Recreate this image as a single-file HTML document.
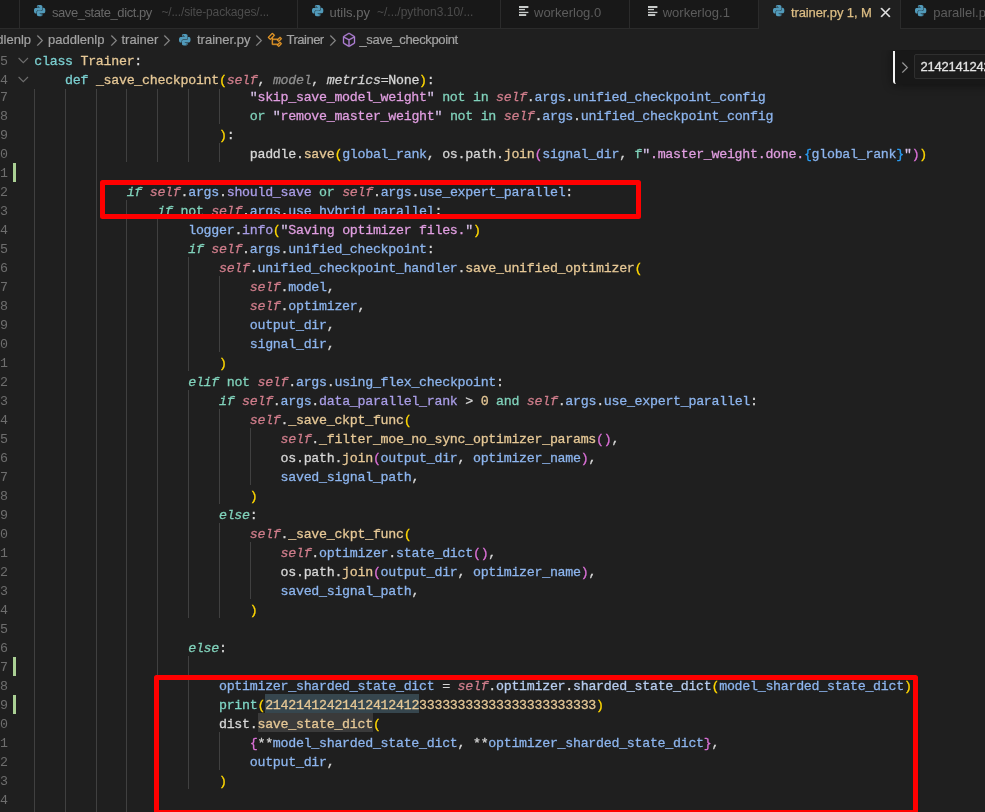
<!DOCTYPE html><html><head><meta charset="utf-8"><title>trainer.py</title><style>

*{box-sizing:border-box;margin:0;padding:0}
html,body{width:985px;height:812px;overflow:hidden;background:#1f1f1f}
body{position:relative;font-family:"Liberation Sans",sans-serif}
#ed{position:absolute;will-change:transform;left:0;top:0;width:985px;height:812px;font-family:"Liberation Mono",monospace;font-size:13.3px;letter-spacing:-0.2843px;color:#d4d4d4}
.r{position:absolute;left:0;width:985px;height:19px;line-height:19px;white-space:pre}
.c{position:absolute;left:34.3px;top:2px;-webkit-text-stroke:0.28px}
.ln{position:absolute;left:0px;top:2px;color:#6e6e6e}
.g{position:absolute;top:0;width:1px;height:19px;background:#404040}
.git{position:absolute;left:13px;top:0.6px;width:3px;height:19px;background:#aad094}
.i{font-style:italic}
.kw{color:#80d2bb}
.kwd{color:#7bcfd0}
.kwi{color:#80d2bb}
.cls{color:#e6c896}
.fn{color:#e6c896}
.self{color:#cf7d8b}
.par{color:#8e8e8e}
.var{color:#8db5ee}
.prop{color:#a99de6}
.pl{color:#d6d6d6}
.str{color:#e09ee0}
.q{color:#d8c2ea}
.b1{color:#ffd700}
.b2{color:#da70d6}
.b3{color:#2b9bf0}
.num{color:#e6c896}
.ln{color:#6e6e6e}
.kwi,.self,.par,.pari{font-style:italic}
.pari{color:#d0d0d0}
.var2{color:#b6ccee}
.bi{color:#7fd6c6}
.numh{color:#e6c896}
.fnh{color:#e6c896}
.hl{position:absolute;top:0;height:19px}

#tabs{position:absolute;will-change:transform;left:0;top:0;width:985px;height:29px;background:#181818;font-size:13px;color:#686868}
#tabs:after{content:"";position:absolute;left:0;top:28px;width:985px;height:1px;background:#2b2b2b}
.tab{position:absolute;top:0;height:29px;border-right:1px solid #2b2b2b;white-space:nowrap;overflow:hidden}
.tab.act{background:#1f1f1f;z-index:2;-webkit-text-stroke:0.25px}
.t{position:absolute;top:0;line-height:25px;white-space:nowrap}
.tab .d{font-size:12px;color:#4c4c4c}
#bc{position:absolute;will-change:transform;-webkit-text-stroke:0.2px;left:0;top:29px;width:985px;height:21px;background:#1f1f1f;font-size:13px;color:#a2a2a2;white-space:nowrap}
#bc .t{line-height:22px}
svg.ic{position:absolute;overflow:visible}
#findclip{position:absolute;left:860px;top:50.4px;width:125px;height:70px;overflow:hidden}
#find{position:absolute;will-change:transform;left:33px;top:0.4px;width:100px;height:33px;background:#181818;border-left:2.6px solid #f4f4f4;border-bottom-left-radius:3px;box-shadow:0 0 8px 2px rgba(0,0,0,.36)}
#find .inp{position:absolute;-webkit-text-stroke:0.3px;left:19.2px;top:3px;width:90px;height:25px;background:#1c1c1c;border:1px solid #2f2f2f;border-radius:2px;color:#e4e4e4;font-size:13px;line-height:23px;padding-left:5.3px;white-space:nowrap;overflow:hidden;letter-spacing:-0.22px}
.ann{position:absolute;border:5.2px solid #ff0000;border-radius:2.5px}

</style></head><body>
<div id="ed">
<div style="position:absolute;left:0;top:50px;width:985px;height:38.5px;background:#1f1f1f;z-index:1"></div>
<div class="r" style="top:50px;z-index:2"><span class="ln">5</span><svg style="position:absolute;left:17.5px;top:5px" width="11" height="10" viewBox="0 0 11 10"><path d="M0.6 3.0 L5.3 7.7 L10 3.0" fill="none" stroke="#6e6e6e" stroke-width="1.1"/></svg><span class="c"><span class="kwd">class</span><span class="pl"> </span><span class="cls">Trainer</span><span class="pl">:</span></span></div>
<div class="r" style="top:69px;z-index:2"><span class="ln">4</span><svg style="position:absolute;left:17.5px;top:5px" width="11" height="10" viewBox="0 0 11 10"><path d="M0.6 3.0 L5.3 7.7 L10 3.0" fill="none" stroke="#6e6e6e" stroke-width="1.1"/></svg><span class="c">    <span class="kwd">def</span><span class="pl"> </span><span class="fn">_save_checkpoint</span><span class="b1">(</span><span class="self">self</span><span class="pl">, </span><span class="par">model</span><span class="pl">, </span><span class="pari">metrics</span><span class="pl">=None</span><span class="b1">)</span><span class="pl">:</span></span></div>
<div class="r" style="top:86px"><span class="ln">7</span><span class="g" style="left:34.0px"></span><span class="g" style="left:64.8px"></span><span class="g" style="left:95.6px"></span><span class="g" style="left:126.4px"></span><span class="g" style="left:157.2px"></span><span class="g" style="left:187.9px"></span><span class="g" style="left:218.7px"></span><span class="c">                            <span class="str"><span class="q">"</span>skip_save_model_weight<span class="q">"</span></span><span class="pl"> </span><span class="kw">not</span><span class="pl"> </span><span class="kw">in</span><span class="pl"> </span><span class="self">self</span><span class="pl">.</span><span class="var">args</span><span class="pl">.</span><span class="var">unified_checkpoint_config</span></span></div>
<div class="r" style="top:105px"><span class="ln">8</span><span class="g" style="left:34.0px"></span><span class="g" style="left:64.8px"></span><span class="g" style="left:95.6px"></span><span class="g" style="left:126.4px"></span><span class="g" style="left:157.2px"></span><span class="g" style="left:187.9px"></span><span class="g" style="left:218.7px"></span><span class="c">                            <span class="kw">or</span><span class="pl"> </span><span class="str"><span class="q">"</span>remove_master_weight<span class="q">"</span></span><span class="pl"> </span><span class="kw">not</span><span class="pl"> </span><span class="kw">in</span><span class="pl"> </span><span class="self">self</span><span class="pl">.</span><span class="var">args</span><span class="pl">.</span><span class="var">unified_checkpoint_config</span></span></div>
<div class="r" style="top:124px"><span class="ln">9</span><span class="g" style="left:34.0px"></span><span class="g" style="left:64.8px"></span><span class="g" style="left:95.6px"></span><span class="g" style="left:126.4px"></span><span class="g" style="left:157.2px"></span><span class="g" style="left:187.9px"></span><span class="c">                        <span class="b1">)</span><span class="pl">:</span></span></div>
<div class="r" style="top:143px"><span class="ln">0</span><span class="g" style="left:34.0px"></span><span class="g" style="left:64.8px"></span><span class="g" style="left:95.6px"></span><span class="g" style="left:126.4px"></span><span class="g" style="left:157.2px"></span><span class="g" style="left:187.9px"></span><span class="g" style="left:218.7px"></span><span class="c">                            <span class="pl">paddle.</span><span class="fn">save</span><span class="b1">(</span><span class="var">global_rank</span><span class="pl">, os.path.</span><span class="fn">join</span><span class="b2">(</span><span class="var">signal_dir</span><span class="pl">, </span><span class="kw">f</span><span class="str"><span class="q">"</span>.master_weight.done.</span><span class="b3">{</span><span class="var">global_rank</span><span class="b3">}</span><span class="str"><span class="q">"</span></span><span class="b2">)</span><span class="b1">)</span></span></div>
<div class="r" style="top:162px"><span class="ln">1</span><span class="git"></span><span class="g" style="left:34.0px"></span><span class="g" style="left:64.8px"></span><span class="g" style="left:95.6px"></span></div>
<div class="r" style="top:181px"><span class="ln">2</span><span class="g" style="left:34.0px"></span><span class="g" style="left:64.8px"></span><span class="g" style="left:95.6px"></span><span class="c">            <span class="kwi">if</span><span class="pl"> </span><span class="self">self</span><span class="pl">.</span><span class="var">args</span><span class="pl">.</span><span class="prop">should_save</span><span class="pl"> </span><span class="kw">or</span><span class="pl"> </span><span class="self">self</span><span class="pl">.</span><span class="var">args</span><span class="pl">.</span><span class="var">use_expert_parallel</span><span class="pl">:</span></span></div>
<div class="r" style="top:200px"><span class="ln">3</span><span class="g" style="left:34.0px"></span><span class="g" style="left:64.8px"></span><span class="g" style="left:95.6px"></span><span class="g" style="left:126.4px"></span><span class="c">                <span class="kwi">if</span><span class="pl"> </span><span class="kw">not</span><span class="pl"> </span><span class="self">self</span><span class="pl">.</span><span class="var">args</span><span class="pl">.</span><span class="var">use_hybrid_parallel</span><span class="pl">:</span></span></div>
<div class="r" style="top:219px"><span class="ln">4</span><span class="g" style="left:34.0px"></span><span class="g" style="left:64.8px"></span><span class="g" style="left:95.6px"></span><span class="g" style="left:126.4px"></span><span class="g" style="left:157.2px"></span><span class="c">                    <span class="var">logger</span><span class="pl">.</span><span class="prop">info</span><span class="b1">(</span><span class="str"><span class="q">"</span>Saving optimizer files.<span class="q">"</span></span><span class="b1">)</span></span></div>
<div class="r" style="top:238px"><span class="ln">5</span><span class="g" style="left:34.0px"></span><span class="g" style="left:64.8px"></span><span class="g" style="left:95.6px"></span><span class="g" style="left:126.4px"></span><span class="g" style="left:157.2px"></span><span class="c">                    <span class="kwi">if</span><span class="pl"> </span><span class="self">self</span><span class="pl">.</span><span class="var">args</span><span class="pl">.</span><span class="var">unified_checkpoint</span><span class="pl">:</span></span></div>
<div class="r" style="top:257px"><span class="ln">6</span><span class="g" style="left:34.0px"></span><span class="g" style="left:64.8px"></span><span class="g" style="left:95.6px"></span><span class="g" style="left:126.4px"></span><span class="g" style="left:157.2px"></span><span class="g" style="left:187.9px"></span><span class="c">                        <span class="self">self</span><span class="pl">.</span><span class="var">unified_checkpoint_handler</span><span class="pl">.</span><span class="fn">save_unified_optimizer</span><span class="b1">(</span></span></div>
<div class="r" style="top:276px"><span class="ln">7</span><span class="g" style="left:34.0px"></span><span class="g" style="left:64.8px"></span><span class="g" style="left:95.6px"></span><span class="g" style="left:126.4px"></span><span class="g" style="left:157.2px"></span><span class="g" style="left:187.9px"></span><span class="g" style="left:218.7px"></span><span class="c">                            <span class="self">self</span><span class="pl">.</span><span class="var">model</span><span class="pl">,</span></span></div>
<div class="r" style="top:295px"><span class="ln">8</span><span class="g" style="left:34.0px"></span><span class="g" style="left:64.8px"></span><span class="g" style="left:95.6px"></span><span class="g" style="left:126.4px"></span><span class="g" style="left:157.2px"></span><span class="g" style="left:187.9px"></span><span class="g" style="left:218.7px"></span><span class="c">                            <span class="self">self</span><span class="pl">.</span><span class="var">optimizer</span><span class="pl">,</span></span></div>
<div class="r" style="top:314px"><span class="ln">9</span><span class="g" style="left:34.0px"></span><span class="g" style="left:64.8px"></span><span class="g" style="left:95.6px"></span><span class="g" style="left:126.4px"></span><span class="g" style="left:157.2px"></span><span class="g" style="left:187.9px"></span><span class="g" style="left:218.7px"></span><span class="c">                            <span class="var">output_dir</span><span class="pl">,</span></span></div>
<div class="r" style="top:333px"><span class="ln">0</span><span class="g" style="left:34.0px"></span><span class="g" style="left:64.8px"></span><span class="g" style="left:95.6px"></span><span class="g" style="left:126.4px"></span><span class="g" style="left:157.2px"></span><span class="g" style="left:187.9px"></span><span class="g" style="left:218.7px"></span><span class="c">                            <span class="var">signal_dir</span><span class="pl">,</span></span></div>
<div class="r" style="top:352px"><span class="ln">1</span><span class="g" style="left:34.0px"></span><span class="g" style="left:64.8px"></span><span class="g" style="left:95.6px"></span><span class="g" style="left:126.4px"></span><span class="g" style="left:157.2px"></span><span class="g" style="left:187.9px"></span><span class="c">                        <span class="b1">)</span></span></div>
<div class="r" style="top:371px"><span class="ln">2</span><span class="g" style="left:34.0px"></span><span class="g" style="left:64.8px"></span><span class="g" style="left:95.6px"></span><span class="g" style="left:126.4px"></span><span class="g" style="left:157.2px"></span><span class="c">                    <span class="kwi">elif</span><span class="pl"> </span><span class="kw">not</span><span class="pl"> </span><span class="self">self</span><span class="pl">.</span><span class="var">args</span><span class="pl">.</span><span class="var">using_flex_checkpoint</span><span class="pl">:</span></span></div>
<div class="r" style="top:390px"><span class="ln">3</span><span class="g" style="left:34.0px"></span><span class="g" style="left:64.8px"></span><span class="g" style="left:95.6px"></span><span class="g" style="left:126.4px"></span><span class="g" style="left:157.2px"></span><span class="g" style="left:187.9px"></span><span class="c">                        <span class="kwi">if</span><span class="pl"> </span><span class="self">self</span><span class="pl">.</span><span class="var">args</span><span class="pl">.</span><span class="prop">data_parallel_rank</span><span class="pl"> &gt; </span><span class="num">0</span><span class="pl"> </span><span class="kw">and</span><span class="pl"> </span><span class="self">self</span><span class="pl">.</span><span class="var">args</span><span class="pl">.</span><span class="var">use_expert_parallel</span><span class="pl">:</span></span></div>
<div class="r" style="top:409px"><span class="ln">4</span><span class="g" style="left:34.0px"></span><span class="g" style="left:64.8px"></span><span class="g" style="left:95.6px"></span><span class="g" style="left:126.4px"></span><span class="g" style="left:157.2px"></span><span class="g" style="left:187.9px"></span><span class="g" style="left:218.7px"></span><span class="c">                            <span class="self">self</span><span class="pl">.</span><span class="fn">_save_ckpt_func</span><span class="b1">(</span></span></div>
<div class="r" style="top:428px"><span class="ln">5</span><span class="g" style="left:34.0px"></span><span class="g" style="left:64.8px"></span><span class="g" style="left:95.6px"></span><span class="g" style="left:126.4px"></span><span class="g" style="left:157.2px"></span><span class="g" style="left:187.9px"></span><span class="g" style="left:218.7px"></span><span class="g" style="left:249.5px"></span><span class="c">                                <span class="self">self</span><span class="pl">.</span><span class="fn">_filter_moe_no_sync_optimizer_params</span><span class="b2">(</span><span class="b2">)</span><span class="pl">,</span></span></div>
<div class="r" style="top:447px"><span class="ln">6</span><span class="g" style="left:34.0px"></span><span class="g" style="left:64.8px"></span><span class="g" style="left:95.6px"></span><span class="g" style="left:126.4px"></span><span class="g" style="left:157.2px"></span><span class="g" style="left:187.9px"></span><span class="g" style="left:218.7px"></span><span class="g" style="left:249.5px"></span><span class="c">                                <span class="pl">os.path.</span><span class="fn">join</span><span class="b2">(</span><span class="var">output_dir</span><span class="pl">, </span><span class="var">optimizer_name</span><span class="b2">)</span><span class="pl">,</span></span></div>
<div class="r" style="top:466px"><span class="ln">7</span><span class="g" style="left:34.0px"></span><span class="g" style="left:64.8px"></span><span class="g" style="left:95.6px"></span><span class="g" style="left:126.4px"></span><span class="g" style="left:157.2px"></span><span class="g" style="left:187.9px"></span><span class="g" style="left:218.7px"></span><span class="g" style="left:249.5px"></span><span class="c">                                <span class="var">saved_signal_path</span><span class="pl">,</span></span></div>
<div class="r" style="top:485px"><span class="ln">8</span><span class="g" style="left:34.0px"></span><span class="g" style="left:64.8px"></span><span class="g" style="left:95.6px"></span><span class="g" style="left:126.4px"></span><span class="g" style="left:157.2px"></span><span class="g" style="left:187.9px"></span><span class="g" style="left:218.7px"></span><span class="c">                            <span class="b1">)</span></span></div>
<div class="r" style="top:504px"><span class="ln">9</span><span class="g" style="left:34.0px"></span><span class="g" style="left:64.8px"></span><span class="g" style="left:95.6px"></span><span class="g" style="left:126.4px"></span><span class="g" style="left:157.2px"></span><span class="g" style="left:187.9px"></span><span class="c">                        <span class="kwi">else</span><span class="pl">:</span></span></div>
<div class="r" style="top:523px"><span class="ln">0</span><span class="g" style="left:34.0px"></span><span class="g" style="left:64.8px"></span><span class="g" style="left:95.6px"></span><span class="g" style="left:126.4px"></span><span class="g" style="left:157.2px"></span><span class="g" style="left:187.9px"></span><span class="g" style="left:218.7px"></span><span class="c">                            <span class="self">self</span><span class="pl">.</span><span class="fn">_save_ckpt_func</span><span class="b1">(</span></span></div>
<div class="r" style="top:542px"><span class="ln">1</span><span class="g" style="left:34.0px"></span><span class="g" style="left:64.8px"></span><span class="g" style="left:95.6px"></span><span class="g" style="left:126.4px"></span><span class="g" style="left:157.2px"></span><span class="g" style="left:187.9px"></span><span class="g" style="left:218.7px"></span><span class="g" style="left:249.5px"></span><span class="c">                                <span class="self">self</span><span class="pl">.</span><span class="var">optimizer</span><span class="pl">.</span><span class="var">state_dict</span><span class="b2">(</span><span class="b2">)</span><span class="pl">,</span></span></div>
<div class="r" style="top:561px"><span class="ln">2</span><span class="g" style="left:34.0px"></span><span class="g" style="left:64.8px"></span><span class="g" style="left:95.6px"></span><span class="g" style="left:126.4px"></span><span class="g" style="left:157.2px"></span><span class="g" style="left:187.9px"></span><span class="g" style="left:218.7px"></span><span class="g" style="left:249.5px"></span><span class="c">                                <span class="pl">os.path.</span><span class="fn">join</span><span class="b2">(</span><span class="var">output_dir</span><span class="pl">, </span><span class="var">optimizer_name</span><span class="b2">)</span><span class="pl">,</span></span></div>
<div class="r" style="top:580px"><span class="ln">3</span><span class="g" style="left:34.0px"></span><span class="g" style="left:64.8px"></span><span class="g" style="left:95.6px"></span><span class="g" style="left:126.4px"></span><span class="g" style="left:157.2px"></span><span class="g" style="left:187.9px"></span><span class="g" style="left:218.7px"></span><span class="g" style="left:249.5px"></span><span class="c">                                <span class="var">saved_signal_path</span><span class="pl">,</span></span></div>
<div class="r" style="top:599px"><span class="ln">4</span><span class="g" style="left:34.0px"></span><span class="g" style="left:64.8px"></span><span class="g" style="left:95.6px"></span><span class="g" style="left:126.4px"></span><span class="g" style="left:157.2px"></span><span class="g" style="left:187.9px"></span><span class="g" style="left:218.7px"></span><span class="c">                            <span class="b1">)</span></span></div>
<div class="r" style="top:618px"><span class="ln">5</span><span class="g" style="left:34.0px"></span><span class="g" style="left:64.8px"></span><span class="g" style="left:95.6px"></span><span class="g" style="left:126.4px"></span><span class="g" style="left:157.2px"></span></div>
<div class="r" style="top:637px"><span class="ln">6</span><span class="g" style="left:34.0px"></span><span class="g" style="left:64.8px"></span><span class="g" style="left:95.6px"></span><span class="g" style="left:126.4px"></span><span class="g" style="left:157.2px"></span><span class="c">                    <span class="kwi">else</span><span class="pl">:</span></span></div>
<div class="r" style="top:656px"><span class="ln">7</span><span class="git"></span><span class="g" style="left:34.0px"></span><span class="g" style="left:64.8px"></span><span class="g" style="left:95.6px"></span><span class="g" style="left:126.4px"></span><span class="g" style="left:157.2px"></span><span class="g" style="left:187.9px"></span></div>
<div class="r" style="top:675px"><span class="ln">8</span><span class="g" style="left:34.0px"></span><span class="g" style="left:64.8px"></span><span class="g" style="left:95.6px"></span><span class="g" style="left:126.4px"></span><span class="g" style="left:157.2px"></span><span class="g" style="left:187.9px"></span><span class="c">                        <span class="var">optimizer_sharded_state_dict</span><span class="pl"> = </span><span class="self">self</span><span class="pl">.</span><span class="var2">optimizer</span><span class="pl">.</span><span class="var2">sharded_state_dict</span><span class="b1">(</span><span class="var">model_sharded_state_dict</span><span class="b1">)</span></span></div>
<div class="r" style="top:694px"><span class="ln">9</span><span class="git"></span><span class="g" style="left:34.0px"></span><span class="g" style="left:64.8px"></span><span class="g" style="left:95.6px"></span><span class="g" style="left:126.4px"></span><span class="g" style="left:157.2px"></span><span class="g" style="left:187.9px"></span><span class="hl" style="left:265.2px;width:153.9px;background:#36464e"></span><span class="c">                        <span class="bi">print</span><span class="b1">(</span><span class="numh">21421412421412412412</span><span class="num">33333333333333333333333</span><span class="b1">)</span></span></div>
<div class="r" style="top:713px"><span class="ln">0</span><span class="g" style="left:34.0px"></span><span class="g" style="left:64.8px"></span><span class="g" style="left:95.6px"></span><span class="g" style="left:126.4px"></span><span class="g" style="left:157.2px"></span><span class="g" style="left:187.9px"></span><span class="hl" style="left:257.5px;width:115.5px;background:#3a3a3a"></span><span class="c">                        <span class="pl">dist.</span><span class="fnh">save_state_dict</span><span class="b1">(</span></span></div>
<div class="r" style="top:732px"><span class="ln">1</span><span class="g" style="left:34.0px"></span><span class="g" style="left:64.8px"></span><span class="g" style="left:95.6px"></span><span class="g" style="left:126.4px"></span><span class="g" style="left:157.2px"></span><span class="g" style="left:187.9px"></span><span class="g" style="left:218.7px"></span><span class="c">                            <span class="b2">{</span><span class="pl">**</span><span class="var">model_sharded_state_dict</span><span class="pl">, **</span><span class="var">optimizer_sharded_state_dict</span><span class="b2">}</span><span class="pl">,</span></span></div>
<div class="r" style="top:751px"><span class="ln">2</span><span class="g" style="left:34.0px"></span><span class="g" style="left:64.8px"></span><span class="g" style="left:95.6px"></span><span class="g" style="left:126.4px"></span><span class="g" style="left:157.2px"></span><span class="g" style="left:187.9px"></span><span class="g" style="left:218.7px"></span><span class="c">                            <span class="var">output_dir</span><span class="pl">,</span></span></div>
<div class="r" style="top:770px"><span class="ln">3</span><span class="g" style="left:34.0px"></span><span class="g" style="left:64.8px"></span><span class="g" style="left:95.6px"></span><span class="g" style="left:126.4px"></span><span class="g" style="left:157.2px"></span><span class="g" style="left:187.9px"></span><span class="c">                        <span class="b1">)</span></span></div>
<div class="r" style="top:789px"><span class="ln">4</span><span class="g" style="left:34.0px"></span><span class="g" style="left:64.8px"></span><span class="g" style="left:95.6px"></span><span class="g" style="left:126.4px"></span><span class="g" style="left:157.2px"></span></div>
<div class="r" style="top:808px"><span class="ln">5</span><span class="g" style="left:34.0px"></span><span class="g" style="left:64.8px"></span><span class="g" style="left:95.6px"></span><span class="g" style="left:126.4px"></span><span class="g" style="left:157.2px"></span></div>
</div>

<div id="tabs">
<div class="tab" style="left:0;width:20px"></div>
<div class="tab" style="left:20px;width:278px"><svg class="ic" style="left:14.2px;top:5.3px" width="11.3" height="11.3" viewBox="0 0 24 24"><path fill="#519aba" d="M14.25.18l.9.2.73.26.59.3.45.32.34.34.25.34.16.33.1.3.04.26.02.2-.01.13V8.5l-.05.63-.13.55-.21.46-.26.38-.3.31-.33.25-.35.19-.35.14-.33.1-.3.07-.26.04-.21.02H8.77l-.69.05-.59.14-.5.22-.41.27-.33.32-.27.35-.2.36-.15.37-.1.35-.07.32-.04.27-.02.21v3.06H3.17l-.21-.03-.28-.07-.32-.12-.35-.18-.36-.26-.36-.36-.35-.46-.32-.59-.28-.73-.21-.88-.14-1.05-.05-1.23.06-1.22.16-1.04.24-.87.32-.71.36-.57.4-.44.42-.33.42-.24.4-.16.36-.1.32-.05.24-.01h.16l.06.01h8.16v-.83H6.18l-.01-2.75-.02-.37.05-.34.11-.31.17-.28.25-.26.31-.23.38-.2.44-.18.51-.15.58-.12.64-.1.71-.06.77-.04.84-.02 1.27.05zm-6.3 1.98l-.23.33-.08.41.08.41.23.34.33.22.41.09.41-.09.33-.22.23-.34.08-.41-.08-.41-.23-.33-.33-.22-.41-.09-.41.09zm13.09 3.95l.28.06.32.12.35.18.36.27.36.35.35.47.32.59.28.73.21.88.14 1.04.05 1.23-.06 1.23-.16 1.04-.24.86-.32.71-.36.57-.4.45-.42.33-.42.24-.4.16-.36.09-.32.05-.24.02-.16-.01h-8.22v.82h5.84l.01 2.76.02.36-.05.34-.11.31-.17.29-.25.25-.31.24-.38.2-.44.17-.51.15-.58.13-.64.09-.71.07-.77.04-.84.01-1.27-.04-1.07-.14-.9-.2-.73-.25-.59-.3-.45-.33-.34-.34-.25-.34-.16-.33-.1-.3-.04-.25-.02-.2.01-.13v-5.34l.05-.64.13-.54.21-.46.26-.38.3-.32.33-.24.35-.2.35-.14.33-.1.3-.06.26-.04.21-.02.13-.01h5.84l.69-.05.59-.14.5-.21.41-.28.33-.32.27-.35.2-.36.15-.36.1-.35.07-.32.04-.28.02-.21V6.07h2.09l.14.01zm-6.47 14.25l-.23.33-.08.41.08.41.23.33.33.23.41.08.41-.08.33-.23.23-.33.08-.41-.08-.41-.23-.33-.33-.23-.41-.08-.41.08z"/></svg><span class="t" style="left:32px;letter-spacing:-0.43px">save_state_dict.py</span><span class="t d" style="left:141.4px;letter-spacing:-0.15px">~/.../site-packages/...</span></div>
<div class="tab" style="left:298px;width:203px"><svg class="ic" style="left:13.8px;top:5.3px" width="11.3" height="11.3" viewBox="0 0 24 24"><path fill="#519aba" d="M14.25.18l.9.2.73.26.59.3.45.32.34.34.25.34.16.33.1.3.04.26.02.2-.01.13V8.5l-.05.63-.13.55-.21.46-.26.38-.3.31-.33.25-.35.19-.35.14-.33.1-.3.07-.26.04-.21.02H8.77l-.69.05-.59.14-.5.22-.41.27-.33.32-.27.35-.2.36-.15.37-.1.35-.07.32-.04.27-.02.21v3.06H3.17l-.21-.03-.28-.07-.32-.12-.35-.18-.36-.26-.36-.36-.35-.46-.32-.59-.28-.73-.21-.88-.14-1.05-.05-1.23.06-1.22.16-1.04.24-.87.32-.71.36-.57.4-.44.42-.33.42-.24.4-.16.36-.1.32-.05.24-.01h.16l.06.01h8.16v-.83H6.18l-.01-2.75-.02-.37.05-.34.11-.31.17-.28.25-.26.31-.23.38-.2.44-.18.51-.15.58-.12.64-.1.71-.06.77-.04.84-.02 1.27.05zm-6.3 1.98l-.23.33-.08.41.08.41.23.34.33.22.41.09.41-.09.33-.22.23-.34.08-.41-.08-.41-.23-.33-.33-.22-.41-.09-.41.09zm13.09 3.95l.28.06.32.12.35.18.36.27.36.35.35.47.32.59.28.73.21.88.14 1.04.05 1.23-.06 1.23-.16 1.04-.24.86-.32.71-.36.57-.4.45-.42.33-.42.24-.4.16-.36.09-.32.05-.24.02-.16-.01h-8.22v.82h5.84l.01 2.76.02.36-.05.34-.11.31-.17.29-.25.25-.31.24-.38.2-.44.17-.51.15-.58.13-.64.09-.71.07-.77.04-.84.01-1.27-.04-1.07-.14-.9-.2-.73-.25-.59-.3-.45-.33-.34-.34-.25-.34-.16-.33-.1-.3-.04-.25-.02-.2.01-.13v-5.34l.05-.64.13-.54.21-.46.26-.38.3-.32.33-.24.35-.2.35-.14.33-.1.3-.06.26-.04.21-.02.13-.01h5.84l.69-.05.59-.14.5-.21.41-.28.33-.32.27-.35.2-.36.15-.36.1-.35.07-.32.04-.28.02-.21V6.07h2.09l.14.01zm-6.47 14.25l-.23.33-.08.41.08.41.23.33.33.23.41.08.41-.08.33-.23.23-.33.08-.41-.08-.41-.23-.33-.33-.23-.41-.08-.41.08z"/></svg><span class="t" style="left:31.5px">utils.py</span><span class="t d" style="left:79px">~/.../python3.10/...</span></div>
<div class="tab" style="left:501px;width:129px"><svg class="ic" style="left:18px;top:6px" width="10" height="10" viewBox="0 0 10 10"><g fill="#c8cbca"><rect x="0" y="0" width="9.4" height="2"/><rect x="0" y="2.9" width="6" height="1.3"/><rect x="0" y="5.8" width="9.4" height="1.3"/><rect x="0" y="8.1" width="7.2" height="1.9"/></g></svg><span class="t" style="left:33px;color:#5c5c5c">workerlog.0</span></div>
<div class="tab" style="left:630px;width:129px"><svg class="ic" style="left:17.8px;top:6px" width="10" height="10" viewBox="0 0 10 10"><g fill="#c8cbca"><rect x="0" y="0" width="9.4" height="2"/><rect x="0" y="2.9" width="6" height="1.3"/><rect x="0" y="5.8" width="9.4" height="1.3"/><rect x="0" y="8.1" width="7.2" height="1.9"/></g></svg><span class="t" style="left:32.7px;color:#5c5c5c">workerlog.1</span></div>
<div class="tab act" style="left:759px;width:142px"><svg class="ic" style="left:14.2px;top:5.3px" width="11.3" height="11.3" viewBox="0 0 24 24"><path fill="#519aba" d="M14.25.18l.9.2.73.26.59.3.45.32.34.34.25.34.16.33.1.3.04.26.02.2-.01.13V8.5l-.05.63-.13.55-.21.46-.26.38-.3.31-.33.25-.35.19-.35.14-.33.1-.3.07-.26.04-.21.02H8.77l-.69.05-.59.14-.5.22-.41.27-.33.32-.27.35-.2.36-.15.37-.1.35-.07.32-.04.27-.02.21v3.06H3.17l-.21-.03-.28-.07-.32-.12-.35-.18-.36-.26-.36-.36-.35-.46-.32-.59-.28-.73-.21-.88-.14-1.05-.05-1.23.06-1.22.16-1.04.24-.87.32-.71.36-.57.4-.44.42-.33.42-.24.4-.16.36-.1.32-.05.24-.01h.16l.06.01h8.16v-.83H6.18l-.01-2.75-.02-.37.05-.34.11-.31.17-.28.25-.26.31-.23.38-.2.44-.18.51-.15.58-.12.64-.1.71-.06.77-.04.84-.02 1.27.05zm-6.3 1.98l-.23.33-.08.41.08.41.23.34.33.22.41.09.41-.09.33-.22.23-.34.08-.41-.08-.41-.23-.33-.33-.22-.41-.09-.41.09zm13.09 3.95l.28.06.32.12.35.18.36.27.36.35.35.47.32.59.28.73.21.88.14 1.04.05 1.23-.06 1.23-.16 1.04-.24.86-.32.71-.36.57-.4.45-.42.33-.42.24-.4.16-.36.09-.32.05-.24.02-.16-.01h-8.22v.82h5.84l.01 2.76.02.36-.05.34-.11.31-.17.29-.25.25-.31.24-.38.2-.44.17-.51.15-.58.13-.64.09-.71.07-.77.04-.84.01-1.27-.04-1.07-.14-.9-.2-.73-.25-.59-.3-.45-.33-.34-.34-.25-.34-.16-.33-.1-.3-.04-.25-.02-.2.01-.13v-5.34l.05-.64.13-.54.21-.46.26-.38.3-.32.33-.24.35-.2.35-.14.33-.1.3-.06.26-.04.21-.02.13-.01h5.84l.69-.05.59-.14.5-.21.41-.28.33-.32.27-.35.2-.36.15-.36.1-.35.07-.32.04-.28.02-.21V6.07h2.09l.14.01zm-6.47 14.25l-.23.33-.08.41.08.41.23.33.33.23.41.08.41-.08.33-.23.23-.33.08-.41-.08-.41-.23-.33-.33-.23-.41-.08-.41.08z"/></svg><span class="t" style="left:32px;color:#dcbd84;letter-spacing:-0.11px">trainer.py 1, M</span><svg class="ic" style="left:117.8px;top:3.8px" width="17" height="17" viewBox="0 0 16 16"><path fill="#e8e8e8" stroke="#e8e8e8" stroke-width="0.45" d="M8 8.707l3.646 3.647.708-.707L8.707 8l3.647-3.646-.707-.708L8 7.293 4.354 3.646l-.707.708L7.293 8l-3.646 3.646.707.708L8 8.707z"/></svg></div>
<div class="tab" style="left:901px;width:90px;border:none"><svg class="ic" style="left:14.2px;top:5.3px" width="11.3" height="11.3" viewBox="0 0 24 24"><path fill="#519aba" d="M14.25.18l.9.2.73.26.59.3.45.32.34.34.25.34.16.33.1.3.04.26.02.2-.01.13V8.5l-.05.63-.13.55-.21.46-.26.38-.3.31-.33.25-.35.19-.35.14-.33.1-.3.07-.26.04-.21.02H8.77l-.69.05-.59.14-.5.22-.41.27-.33.32-.27.35-.2.36-.15.37-.1.35-.07.32-.04.27-.02.21v3.06H3.17l-.21-.03-.28-.07-.32-.12-.35-.18-.36-.26-.36-.36-.35-.46-.32-.59-.28-.73-.21-.88-.14-1.05-.05-1.23.06-1.22.16-1.04.24-.87.32-.71.36-.57.4-.44.42-.33.42-.24.4-.16.36-.1.32-.05.24-.01h.16l.06.01h8.16v-.83H6.18l-.01-2.75-.02-.37.05-.34.11-.31.17-.28.25-.26.31-.23.38-.2.44-.18.51-.15.58-.12.64-.1.71-.06.77-.04.84-.02 1.27.05zm-6.3 1.98l-.23.33-.08.41.08.41.23.34.33.22.41.09.41-.09.33-.22.23-.34.08-.41-.08-.41-.23-.33-.33-.22-.41-.09-.41.09zm13.09 3.95l.28.06.32.12.35.18.36.27.36.35.35.47.32.59.28.73.21.88.14 1.04.05 1.23-.06 1.23-.16 1.04-.24.86-.32.71-.36.57-.4.45-.42.33-.42.24-.4.16-.36.09-.32.05-.24.02-.16-.01h-8.22v.82h5.84l.01 2.76.02.36-.05.34-.11.31-.17.29-.25.25-.31.24-.38.2-.44.17-.51.15-.58.13-.64.09-.71.07-.77.04-.84.01-1.27-.04-1.07-.14-.9-.2-.73-.25-.59-.3-.45-.33-.34-.34-.25-.34-.16-.33-.1-.3-.04-.25-.02-.2.01-.13v-5.34l.05-.64.13-.54.21-.46.26-.38.3-.32.33-.24.35-.2.35-.14.33-.1.3-.06.26-.04.21-.02.13-.01h5.84l.69-.05.59-.14.5-.21.41-.28.33-.32.27-.35.2-.36.15-.36.1-.35.07-.32.04-.28.02-.21V6.07h2.09l.14.01zm-6.47 14.25l-.23.33-.08.41.08.41.23.33.33.23.41.08.41-.08.33-.23.23-.33.08-.41-.08-.41-.23-.33-.33-.23-.41-.08-.41.08z"/></svg><span class="t" style="left:32.2px;color:#5c5c5c">parallel.py</span></div>
</div>
<div id="bc">
<span class="t" style="left:-3.7px">dlenlp</span>
<svg class="ic" style="left:31.1px;top:2.6px" width="17" height="17" viewBox="0 0 16 16"><path fill="#929292" stroke="#929292" stroke-width="0.3" d="M10.072 8.024L5.715 3.667l.618-.62L11 7.716v.618L6.333 13l-.618-.619 4.357-4.357z"/></svg>
<span class="t" style="left:48px">paddlenlp</span>
<svg class="ic" style="left:104.9px;top:2.6px" width="17" height="17" viewBox="0 0 16 16"><path fill="#929292" stroke="#929292" stroke-width="0.3" d="M10.072 8.024L5.715 3.667l.618-.62L11 7.716v.618L6.333 13l-.618-.619 4.357-4.357z"/></svg>
<span class="t" style="left:121.5px">trainer</span>
<svg class="ic" style="left:158.4px;top:2.6px" width="17" height="17" viewBox="0 0 16 16"><path fill="#929292" stroke="#929292" stroke-width="0.3" d="M10.072 8.024L5.715 3.667l.618-.62L11 7.716v.618L6.333 13l-.618-.619 4.357-4.357z"/></svg>
<svg class="ic" style="left:179.2px;top:5px" width="11.5" height="11.5" viewBox="0 0 24 24"><path fill="#519aba" d="M14.25.18l.9.2.73.26.59.3.45.32.34.34.25.34.16.33.1.3.04.26.02.2-.01.13V8.5l-.05.63-.13.55-.21.46-.26.38-.3.31-.33.25-.35.19-.35.14-.33.1-.3.07-.26.04-.21.02H8.77l-.69.05-.59.14-.5.22-.41.27-.33.32-.27.35-.2.36-.15.37-.1.35-.07.32-.04.27-.02.21v3.06H3.17l-.21-.03-.28-.07-.32-.12-.35-.18-.36-.26-.36-.36-.35-.46-.32-.59-.28-.73-.21-.88-.14-1.05-.05-1.23.06-1.22.16-1.04.24-.87.32-.71.36-.57.4-.44.42-.33.42-.24.4-.16.36-.1.32-.05.24-.01h.16l.06.01h8.16v-.83H6.18l-.01-2.75-.02-.37.05-.34.11-.31.17-.28.25-.26.31-.23.38-.2.44-.18.51-.15.58-.12.64-.1.71-.06.77-.04.84-.02 1.27.05zm-6.3 1.98l-.23.33-.08.41.08.41.23.34.33.22.41.09.41-.09.33-.22.23-.34.08-.41-.08-.41-.23-.33-.33-.22-.41-.09-.41.09zm13.09 3.95l.28.06.32.12.35.18.36.27.36.35.35.47.32.59.28.73.21.88.14 1.04.05 1.23-.06 1.23-.16 1.04-.24.86-.32.71-.36.57-.4.45-.42.33-.42.24-.4.16-.36.09-.32.05-.24.02-.16-.01h-8.22v.82h5.84l.01 2.76.02.36-.05.34-.11.31-.17.29-.25.25-.31.24-.38.2-.44.17-.51.15-.58.13-.64.09-.71.07-.77.04-.84.01-1.27-.04-1.07-.14-.9-.2-.73-.25-.59-.3-.45-.33-.34-.34-.25-.34-.16-.33-.1-.3-.04-.25-.02-.2.01-.13v-5.34l.05-.64.13-.54.21-.46.26-.38.3-.32.33-.24.35-.2.35-.14.33-.1.3-.06.26-.04.21-.02.13-.01h5.84l.69-.05.59-.14.5-.21.41-.28.33-.32.27-.35.2-.36.15-.36.1-.35.07-.32.04-.28.02-.21V6.07h2.09l.14.01zm-6.47 14.25l-.23.33-.08.41.08.41.23.33.33.23.41.08.41-.08.33-.23.23-.33.08-.41-.08-.41-.23-.33-.33-.23-.41-.08-.41.08z"/></svg>
<span class="t" style="left:197px">trainer.py</span>
<svg class="ic" style="left:249.9px;top:2.6px" width="17" height="17" viewBox="0 0 16 16"><path fill="#929292" stroke="#929292" stroke-width="0.3" d="M10.072 8.024L5.715 3.667l.618-.62L11 7.716v.618L6.333 13l-.618-.619 4.357-4.357z"/></svg>
<svg class="ic" style="left:267px;top:3px" width="16" height="16" viewBox="0 0 16 16"><path fill="#ee9d28" stroke="#ee9d28" stroke-width="0.35" d="M11.34 9.71h.71l2.67-2.67v-.71L13.38 5h-.7l-1.82 1.81h-5V5.56l1.86-1.85V3l-2-2H5L1 5v.71l2 2h.71l1.14-1.15v5.79l.5.5H10v.52l1.33 1.34h.71l2.67-2.67v-.71L13.37 10h-.7l-1.86 1.85h-5v-4H10v.48l1.34 1.38zm1.69-3.65l.63.63-2 2-.63-.63 2-2zm0 5l.63.63-2 2-.63-.63 2-2zM3.35 6.650l-1.29-1.300 3.290-3.290 1.300 1.290-3.300 3.300z"/></svg>
<span class="t" style="left:286.5px;letter-spacing:-0.5px">Trainer</span>
<svg class="ic" style="left:324.1px;top:2.6px" width="17" height="17" viewBox="0 0 16 16"><path fill="#929292" stroke="#929292" stroke-width="0.3" d="M10.072 8.024L5.715 3.667l.618-.62L11 7.716v.618L6.333 13l-.618-.619 4.357-4.357z"/></svg>
<svg class="ic" style="left:341px;top:3px" width="16" height="16" viewBox="0 0 16 16"><path fill="#b180d7" stroke="#b180d7" stroke-width="0.35" d="M13.51 4l-5-3h-1l-5 3-.49.86v6l.49.85 5 3h1l5-3 .49-.85v-6L13.51 4zm-6 9.56l-4.5-2.7V5.7l4.500 2.450v5.410zM3.270 4.700l4.740-2.840 4.740 2.840-4.740 2.590L3.270 4.700zm9.740 6.160l-4.500 2.700V8.150l4.500-2.450v5.160z"/></svg>
<span class="t" style="left:359.5px;letter-spacing:-0.36px">_save_checkpoint</span>
</div>
<div id="findclip"><div id="find"><svg class="ic" style="left:1.4px;top:7.7px" width="17" height="17" viewBox="0 0 16 16"><path fill="#a6a6a6" stroke="#a6a6a6" stroke-width="0.3" d="M10.072 8.024L5.715 3.667l.618-.62L11 7.716v.618L6.333 13l-.618-.619 4.357-4.357z"/></svg><div class="inp">2142141242</div></div></div>
<div class="ann" style="left:100px;top:180px;width:541.2px;height:39px"></div>
<div class="ann" style="left:154px;top:675px;width:764.2px;height:140px"></div>

</body></html>
